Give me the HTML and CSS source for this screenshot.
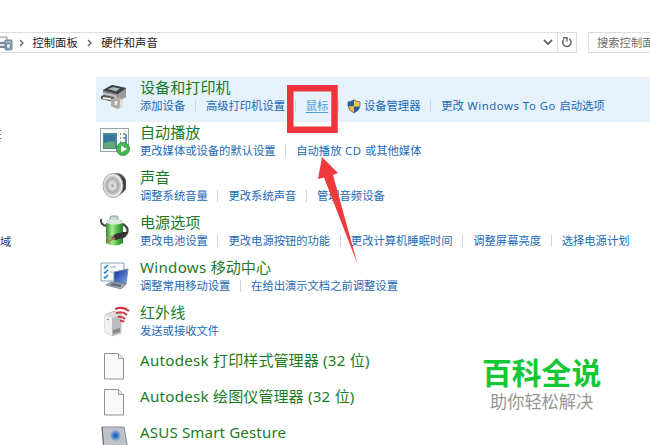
FILE: index.html
```html
<!DOCTYPE html>
<html lang="zh-CN">
<head>
<meta charset="utf-8">
<title>硬件和声音</title>
<link rel="stylesheet" href="styles.css">
</head>
<body>
<header class="toolbar">
  <div class="address">
    <svg class="crumb-icon" width="13" height="18" viewBox="0 0 13 18"><path d="M0 3h7v6H0" fill="#eef4f8" stroke="#8598a8"/><path d="M0 8h9v6H0z" fill="#71889c"/><path d="M0 10h5v2H0z" fill="#dce6ec"/><rect x="5" y="6" width="7" height="10" rx="1" fill="#9eafbd" stroke="#6c8193"/><circle cx="8.5" cy="12" r="2.5" fill="#dbe8f2" stroke="#557890"/></svg>
    <svg class="sep" width="5" height="8" viewBox="0 0 5 8"><path d="M1 1l3 3-3 3" fill="none" stroke="#555" stroke-width="1.2"/></svg>
    <span class="crumb first">控制面板</span>
    <svg class="sep" width="5" height="8" viewBox="0 0 5 8"><path d="M1 1l3 3-3 3" fill="none" stroke="#555" stroke-width="1.2"/></svg>
    <span class="crumb">硬件和声音</span>
    <svg class="down" width="10" height="7" viewBox="0 0 10 7"><path d="M1 1l4 4 4-4" fill="none" stroke="#666" stroke-width="1.8"/></svg>
    <span class="refresh"><svg width="12" height="13" viewBox="0 0 12 13"><path d="M3 3.200a4.200 4.200 0 1 0 5.400-.3" fill="none" stroke="#666" stroke-width="1.500"/><path d="M2 1.800h4v3.700" fill="none" stroke="#666" stroke-width="1.400"/></svg></span>
  </div>
  <div class="search">搜索控制面板</div>
</header>
<div class="content">
  <aside class="side"><span class="cut">性</span><span class="region">域</span></aside>
  <main class="list">
    <section class="row active">
      <svg class="icon" width="32" height="32" viewBox="0 0 32 32"><path d="M5 10L14 5l14 3v9l-9 4-14-5z" fill="#777"/><path d="M5 10l9-5 14 3-8 6z" fill="#3d4144"/><path d="M10 9l5-2 7 1.500-4 3z" fill="#a3b8bd"/><path d="M20 14l8-5v8l-8 4z" fill="#999"/><path d="M5 12l14 3v4L5 15z" fill="#bbb"/><path d="M3 16l3-1 10 2v5L3 19z" fill="#555"/><path d="M5 17l8 1v2l-8-1z" fill="#eee"/><path d="M13 19l8-2 4 2v8l-6 2-6-3z" fill="#b5afa8"/><path d="M16 21l4-1v5l-4 1z" fill="#eee" stroke="#888" stroke-width=".7"/><path d="M22 20l3-1v8l-3 1z" fill="#ddd"/></svg>
      <div class="text"><h2>设备和打印机</h2><nav><a>添加设备</a><a>高级打印机设置</a><a class="hot">鼠标</a><a class="shielded"><svg class="shield" width="14" height="15" viewBox="0 0 14 15"><path d="M7 1v6.500H1V3q3 0 6-2z" fill="#245c9e"/><path d="M7 1q3 2 6 2v4.500H7z" fill="#f0c34b"/><path d="M1 7.500h6V14Q2 11.500 1 7.500z" fill="#edbb3d"/><path d="M7 7.500h6Q12 11.500 7 14z" fill="#245c9e"/><path d="M7 .8q3 2 6 2V7q-.5 4.500-6 7Q1.500 11.500 1 7V2.800q3 0 6-2z" fill="none" stroke="#5b6360" stroke-width=".8"/></svg>设备管理器</a><a><span>更改<span class="latin"> Windows To Go </span>启动选项</span></a></nav></div>
    </section>
    <section class="row">
      <svg class="icon" width="32" height="32" viewBox="0 0 32 32"><rect x="2.500" y="3.500" width="28" height="23" fill="#f7faf9" stroke="#96a5a5"/><rect x="5" y="8" width="14" height="16" fill="#488a8f"/><path d="M6 10h11v12H6z" fill="#3476a0"/><path d="M6 18q6-3 11-1v6H6z" fill="#65a679"/><path d="M22 9h1m2 0h2m-5 4h1m2 0h2m-5 4h1" stroke="#678" stroke-width="1.500"/><path d="M28 9v11" stroke="#356c9b" stroke-width="1.500"/><circle cx="25" cy="24" r="6.500" fill="#43b94c" stroke="#259036" stroke-width=".8"/><path d="M23 20.500l6 3.500-6 3.500z" fill="#fff"/></svg>
      <div class="text"><h2>自动播放</h2><nav><a>更改媒体或设备的默认设置</a><a><span>自动播放<span class="latin"> CD </span>或其他媒体</span></a></nav></div>
    </section>
    <section class="row">
      <svg class="icon" width="32" height="32" viewBox="0 0 32 32"><defs><radialGradient id="cone"><stop offset="0" stop-color="#999"/><stop offset=".3" stop-color="#e4e4e4"/><stop offset=".75" stop-color="#aaa"/><stop offset="1" stop-color="#ddd"/></radialGradient></defs><path d="M16 3q9-1 12 7v9q-5 7-12 8z" fill="#555b5d"/><path d="M22 6q5 8 0 18l5-5v-9z" fill="#343a3d"/><ellipse cx="15" cy="15.500" rx="10" ry="12" fill="#e8e9e9" stroke="#aaa"/><ellipse cx="14.500" cy="15.500" rx="8" ry="9.500" fill="url(#cone)" stroke="#bbb" stroke-width=".6"/></svg>
      <div class="text"><h2>声音</h2><nav><a>调整系统音量</a><a>更改系统声音</a><a>管理音频设备</a></nav></div>
    </section>
    <section class="row">
      <svg class="icon" width="32" height="32" viewBox="0 0 32 32"><defs><linearGradient id="cell"><stop stop-color="#248b28"/><stop offset=".35" stop-color="#a9e992"/><stop offset=".65" stop-color="#58bb4a"/><stop offset="1" stop-color="#207c29"/></linearGradient></defs><path d="M3 4q-1 6 6 7" fill="none" stroke="#444" stroke-width="2"/><rect x="12" y="1" width="8" height="5" rx="2" fill="#ccd5d0" stroke="#899"/><path d="M8 6q8-4 17 0v22q-8 5-17 0z" fill="url(#cell)"/><path d="M8 6q8-4 17 0v2q-8 3-17 0z" fill="#dae6dc"/><path d="M25 9q8 5 2 12l-4 2" fill="none" stroke="#454a46" stroke-width="2.200"/><path d="M30 17q-3 6-12 8l-5-1 4-5 8-2z" fill="#333"/><path d="M16 21l-8 2m9 0l-7 4" stroke="#a58a62" stroke-width="1.700"/></svg>
      <div class="text"><h2>电源选项</h2><nav><a>更改电池设置</a><a>更改电源按钮的功能</a><a>更改计算机睡眠时间</a><a>调整屏幕亮度</a><a>选择电源计划</a></nav></div>
    </section>
    <section class="row">
      <svg class="icon" width="32" height="32" viewBox="0 0 32 32"><defs><linearGradient id="lap" x2="1" y2="1"><stop stop-color="#122c95"/><stop offset="1" stop-color="#79a9e8"/></linearGradient></defs><path d="M3 3h23v18H3z" fill="#f7fbfd" stroke="#89a4b6"/><path d="M6 7l1 1 3-3m-4 7l1 1 3-3m-4 7l1 1 3-3" fill="none" stroke="#2675b5" stroke-width="1.400"/><path d="M12 7h6m-6 5h3" stroke="#9bafc0"/><path d="M16 12l14-3-2 15-12-2z" fill="url(#lap)" stroke="#7890a8"/><path d="M13 22l15 2-5 5-15-4z" fill="#a5afb9" stroke="#66727d" stroke-width=".7"/><path d="M14 23l10 2-2 2-10-2z" fill="#616d78"/></svg>
      <div class="text"><h2><span class="wide">Windows </span>移动中心</h2><nav><a>调整常用移动设置</a><a>在给出演示文档之前调整设置</a></nav></div>
    </section>
    <section class="row">
      <svg class="icon" width="32" height="32" viewBox="0 0 32 32"><path d="M7 10l9-4 7 3v19l-9 3-7-4z" fill="#ddd" stroke="#999" stroke-width=".6"/><path d="M7 10l7 3v18l-7-4z" fill="#f1f1f1"/><path d="M14 13l9-3v18l-9 3z" fill="#bcbfc1"/><path d="M15 25l7-2v4l-7 2z" fill="#888"/><path d="M9 14l2 1" stroke="#777"/><path d="M17 4q8-3 14 2M18 8q7-2 11 2M20 12q4-1 7 2M22 16q2-1 4 1" fill="none" stroke="#c93a43" stroke-width="2"/></svg>
      <div class="text"><h2>红外线</h2><nav><a>发送或接收文件</a></nav></div>
    </section>
    <section class="row short">
      <svg class="icon" width="32" height="32" viewBox="0 0 32 32"><path d="M6.500 3.500h14l5 5v20.500h-19z" fill="#f8f8f8" stroke="#929292"/><path d="M20.500 3.500v5h5" fill="#e5e5e5" stroke="#a1a1a1"/></svg>
      <div class="text"><h2><span class="wide">Autodesk </span>打印样式管理器<span class="wide"> (32 </span>位)</h2></div>
    </section>
    <section class="row short">
      <svg class="icon" width="32" height="32" viewBox="0 0 32 32"><path d="M6.500 3.500h14l5 5v20.500h-19z" fill="#f8f8f8" stroke="#929292"/><path d="M20.500 3.500v5h5" fill="#e5e5e5" stroke="#a1a1a1"/></svg>
      <div class="text"><h2><span class="wide">Autodesk </span>绘图仪管理器<span class="wide"> (32 </span>位)</h2></div>
    </section>
    <section class="row short">
      <svg class="icon" width="32" height="32" viewBox="0 0 32 32"><defs><radialGradient id="glow"><stop stop-color="#0754b8"/><stop offset=".4" stop-color="#3f7fce"/><stop offset="1" stop-color="#c2c8d1"/></radialGradient></defs><path d="M4 5h22l4 23H6z" fill="#bfc2c8" stroke="#888e98"/><path d="M4 5l2 23" stroke="#666"/><circle cx="17.500" cy="13.500" r="6" fill="url(#glow)"/></svg>
      <div class="text"><h2 class="asus">ASUS Smart Gesture</h2></div>
    </section>
  </main>
</div>
<svg class="marker" width="90" height="190" viewBox="0 0 90 190"><path d="M6.250 8.250H50.500v41.500H6.250z" fill="none" stroke="#ee353b" stroke-width="6.500"/><path d="M38 77L54 93l-5 2 24.500 89L40 97.500 34 99z" fill="#ee3a3c"/></svg>
<div class="watermark"><strong>百科全说</strong><span>助你轻松解决</span></div>
</body>
</html>
```

FILE: styles.css
```css
* { box-sizing: border-box; }
body {
  margin: 0;
  height: 445px;
  overflow: hidden;
  position: relative;
  background: #fff;
  font-family: "Noto Sans", "Noto Sans CJK SC", sans-serif;
  font-size: 11.3px;
}
.toolbar { display: flex; gap: 11px; padding-top: 32px; height: 77px; }
.address {
  display: flex;
  align-items: center;
  width: 577px;
  height: 21px;
  border: 1px solid #dedede;
  border-left: 0;
}
.sep { margin-left: 5.500px; }
.crumb { margin-left: 9px; line-height: 19px; color: #222; }
.first { margin-right: 4px; }
.down { margin-left: auto; }
.refresh {
  display: flex;
  align-items: center;
  justify-content: center;
  width: 19px;
  height: 19px;
  margin-left: 4px;
  border-left: 1px solid #dedede;
}
.search {
  flex: 1;
  height: 21px;
  padding-left: 8px;
  border: 1px solid #dedede;
  border-right: 0;
  line-height: 20px;
  color: #707070;
  white-space: nowrap;
  overflow: hidden;
}
.content { display: flex; }
.side { width: 96px; display: flex; flex-direction: column; color: #243d68; }
.cut { width: 11px; margin: 49px 0 0 -9.500px; line-height: 16px; }
.region { margin-top: 92px; line-height: 16px; }
.list { flex: 1; min-width: 0; }
.row { display: flex; height: 45px; padding-left: 2px; }
.active { background: #e5f2fc; }
.icon { flex: none; margin-top: 3px; }
.text { margin-left: 10px; white-space: nowrap; }
h2 { margin: 1px 0 0; font-size: 15.100px; line-height: 19px; font-weight: 400; color: #1b7b25; }
nav { display: flex; height: 14px; margin-top: 2px; line-height: 14px; }
a { display: flex; color: #2269b5; }
a + a::before { content: ""; width: 1px; height: 12px; margin: 1px 10px 0 9.700px; background: #cbd5df; }
.latin { letter-spacing: .55px; }
.wide { letter-spacing: .28px; }
.asus { letter-spacing: .14px; }
.hot { color: #4c9ddb; text-decoration: underline; text-underline-offset: 2px; }
.shielded::before { margin-right: 8px !important; }
.shield { margin-right: 3px; }
.short { height: 36px; }
.short h2 { margin-top: 4px; }
.marker { position: absolute; left: 284px; top: 80px; }
.watermark {
  position: absolute;
  left: 482px;
  top: 355px;
  display: flex;
  flex-direction: column;
  white-space: nowrap;
}
.watermark strong { font-size: 29.800px; line-height: 36px; font-weight: 700; color: #14c735; }
.watermark span { margin-left: 8px; font-size: 17.200px; line-height: 22px; color: #969696; }
```
